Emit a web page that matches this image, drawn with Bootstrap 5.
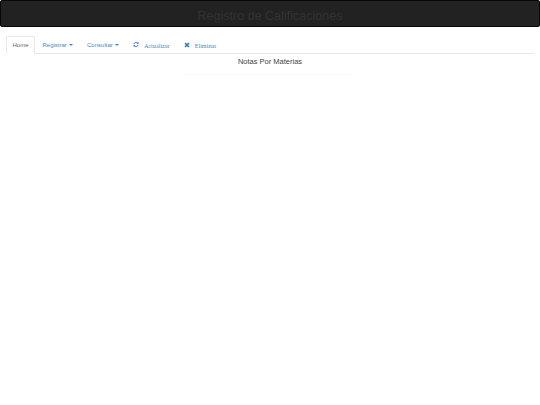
<!DOCTYPE html>
<html lang="es">
<head>
<meta charset="utf-8">
<title>Registro de Calificaciones</title>
<link href="https://cdn.jsdelivr.net/npm/bootstrap@5.3.0/dist/css/bootstrap.min.css" rel="stylesheet">
<style>
body { background: #fff; font-family: "Liberation Sans", Arial, sans-serif; }
.top-banner { height: 27px; background: #222; border: 1px solid #080808; border-radius: 2px; color: #333; font-size: 12.3px; line-height: 30px; letter-spacing: .1px; }
.tab-bar { margin: 9px 6px 0; height: 18px; border-bottom: 1px solid #e8e8e8; font-size: 6px; line-height: 16px; gap: 1px; }
.tab-bar .nav-link { padding: 0 5.5px; height: 18px; color: #4a87bc; border: 1px solid transparent; border-radius: 2px 2px 0 0; line-height: 16px; }
.tab-bar .nav-link.active { color: #666; background: #fff; border-color: #e8e8e8 #e8e8e8 #fff; }
.tab-caret { display: inline-block; margin-left: .5px; vertical-align: middle; border-top: 2px solid; border-left: 2px solid transparent; border-right: 2px solid transparent; }
.tab-serif { font-family: "Liberation Serif", serif; font-size: 6.2px; margin-left: 5px; position: relative; top: 1px; }
.tab-glyph { vertical-align: -.5px; }
.sub-title { font-size: 7.5px; line-height: 14px; color: #444; text-align: center; margin-top: 1px; }
.sub-rule { width: 168px; margin: 5px auto 0 184px; border-top: 1px solid #f7f7f7; }
</style>
</head>
<body>
<div class="top-banner text-center">Registro de Calificaciones</div>
<ul class="nav tab-bar">
<li class="nav-item"><a class="nav-link active" href="#">Home</a></li>
<li class="nav-item"><a class="nav-link" href="#">Registrar <span class="tab-caret"></span></a></li>
<li class="nav-item"><a class="nav-link" href="#">Consultar <span class="tab-caret"></span></a></li>
<li class="nav-item"><a class="nav-link" href="#"><svg class="tab-glyph" width="6" height="7" viewBox="0 0 12 12" fill="none" stroke="#337ab7" stroke-width="2"><path d="M2 5a4.2 4.2 0 0 1 7.4-1.8M10 7a4.2 4.2 0 0 1-7.4 1.8"/><path d="M11 1v4H7zM1 11V7h4z" fill="#337ab7" stroke="none"/></svg><span class="tab-serif">Actualizar</span></a></li>
<li class="nav-item"><a class="nav-link" href="#"><svg class="tab-glyph" width="6" height="6" viewBox="0 0 12 12" fill="none" stroke="#337ab7" stroke-width="3.4"><path d="M2 2l8 8M10 2l-8 8"/></svg><span class="tab-serif">Eliminar</span></a></li>
</ul>
<div class="sub-title">Notas Por Materias</div>
<div class="sub-rule"></div>
<script src="https://cdn.jsdelivr.net/npm/bootstrap@5.3.0/dist/js/bootstrap.bundle.min.js"></script>
</body>
</html>
